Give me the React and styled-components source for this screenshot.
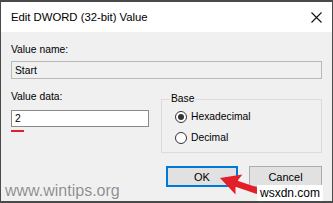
import styled, { createGlobalStyle } from "styled-components";

const GlobalStyle = createGlobalStyle`
  html, body {
    margin: 0;
    padding: 0;
    background: #ffffff;
  }
  * {
    box-sizing: border-box;
  }
`;

export default function App() {
  return (
    <>
      <GlobalStyle />
      <Window>
        <TitleBar>
          <Title>Edit DWORD (32-bit) Value</Title>
          <CloseButton>
            <svg width="11" height="11" viewBox="0 0 11 11">
              <path d="M0.5 0.5 L10.5 10.5 M10.5 0.5 L0.5 10.5" stroke="#111" strokeWidth="1.1" />
            </svg>
          </CloseButton>
        </TitleBar>
        <Body>
          <Label>Value name:</Label>
          <TextBox disabled>Start</TextBox>
          <Row>
            <DataColumn>
              <Label>Value data:</Label>
              <TextBox>2</TextBox>
              <Underline />
            </DataColumn>
            <GroupBox>
              <Legend>Base</Legend>
              <Radio checked>Hexadecimal</Radio>
              <Radio>Decimal</Radio>
            </GroupBox>
          </Row>
          <ButtonRow>
            <Button primary>OK</Button>
            <Button>Cancel</Button>
          </ButtonRow>
        </Body>
        <Arrow width="333" height="203" viewBox="0 0 333 203">
          <polygon
            transform="translate(220 178) rotate(19)"
            points="0,0 20,-10.5 17.5,-3.2 40,-3.2 40,3.2 17.5,3.2 20,10.5"
            fill="#e3202a"
          />
        </Arrow>
        <SiteMark>www.wintips.org</SiteMark>
        <SourceMark>wsxdn.com</SourceMark>
      </Window>
    </>
  );
}

function Radio({ checked, children }) {
  return (
    <RadioRow>
      <RadioCircle>{checked && <RadioDot />}</RadioCircle>
      <span>{children}</span>
    </RadioRow>
  );
}

const Window = styled.div`
  position: relative;
  width: 333px;
  height: 203px;
  display: flex;
  flex-direction: column;
  border: 1px solid #4a4a4a;
  border-top-width: 2px;
  border-bottom-width: 2px;
  background: #f0f0f0;
  font-family: "Liberation Sans", Arial, sans-serif;
  color: #000;
  overflow: hidden;
`;

const TitleBar = styled.div`
  height: 30px;
  flex: none;
  display: flex;
  align-items: center;
  justify-content: space-between;
  padding: 0 10px 0 10px;
  background: #ffffff;
`;

const Title = styled.span`
  font-size: 11.3px;
  line-height: 14px;
`;

const CloseButton = styled.div`
  display: flex;
  align-items: center;
  justify-content: center;
  width: 12px;
  height: 12px;
`;

const Body = styled.div`
  flex: 1;
  display: flex;
  flex-direction: column;
  padding: 11px 10px 0 10px;
`;

const Label = styled.div`
  font-size: 10.3px;
  line-height: 14px;
`;

const TextBox = styled.div`
  height: 18px;
  margin-top: 4px;
  padding: 0 3px;
  display: flex;
  align-items: center;
  font-size: 10.3px;
  border: 1px solid ${({ disabled }) => (disabled ? "#b8b8b8" : "#8a8a8a")};
  background: ${({ disabled }) => (disabled ? "#f0f0f0" : "#ffffff")};
`;

const Row = styled.div`
  display: flex;
  align-items: flex-start;
  gap: 12px;
  margin-top: 11px;
`;

const DataColumn = styled.div`
  width: 138px;
  display: flex;
  flex-direction: column;
  & > ${TextBox} {
    margin-top: 6px;
    height: 17px;
  }
`;

const Underline = styled.div`
  width: 13px;
  height: 2px;
  margin-top: 3px;
  background: #e02028;
`;

const GroupBox = styled.fieldset`
  flex: 1;
  margin: 3px 0 0 0;
  min-width: 0;
  height: 60px;
  padding: 5px 8px 0 13px;
  border: 1px solid #dcdcdc;
  display: flex;
  flex-direction: column;
  gap: 7px;
`;

const Legend = styled.legend`
  padding: 0 1px;
  margin-left: -5px;
  font-size: 10.3px;
  line-height: 12px;
`;

const RadioRow = styled.div`
  display: flex;
  align-items: center;
  gap: 4px;
  font-size: 10.3px;
  line-height: 14px;
`;

const RadioCircle = styled.span`
  width: 12px;
  height: 12px;
  border-radius: 50%;
  border: 1px solid #333;
  background: #fff;
  display: flex;
  align-items: center;
  justify-content: center;
`;

const RadioDot = styled.span`
  width: 6px;
  height: 6px;
  border-radius: 50%;
  background: #333;
`;

const ButtonRow = styled.div`
  display: flex;
  justify-content: flex-end;
  gap: 11px;
  margin-top: 13px;
`;

const Button = styled.div`
  width: ${({ primary }) => (primary ? "72px" : "73px")};
  height: 21px;
  display: flex;
  align-items: center;
  justify-content: center;
  font-size: 11px;
  background: #e1e1e1;
  border: ${({ primary }) => (primary ? "2px solid #0078d7" : "1px solid #adadad")};
`;

const Arrow = styled.svg`
  position: absolute;
  left: -1px;
  top: -2px;
  pointer-events: none;
`;

const SiteMark = styled.div`
  position: absolute;
  left: 4px;
  top: 180px;
  font-size: 16px;
  line-height: 18px;
  color: #8e8e8e;
  text-shadow: 0 0 1px #ffffff, 0 0 1px #ffffff;
`;

const SourceMark = styled.div`
  position: absolute;
  left: 256px;
  top: 183px;
  width: 66px;
  height: 17px;
  padding-left: 3px;
  background: #ffffff;
  font-size: 12px;
  line-height: 17px;
  color: #000;
`;
